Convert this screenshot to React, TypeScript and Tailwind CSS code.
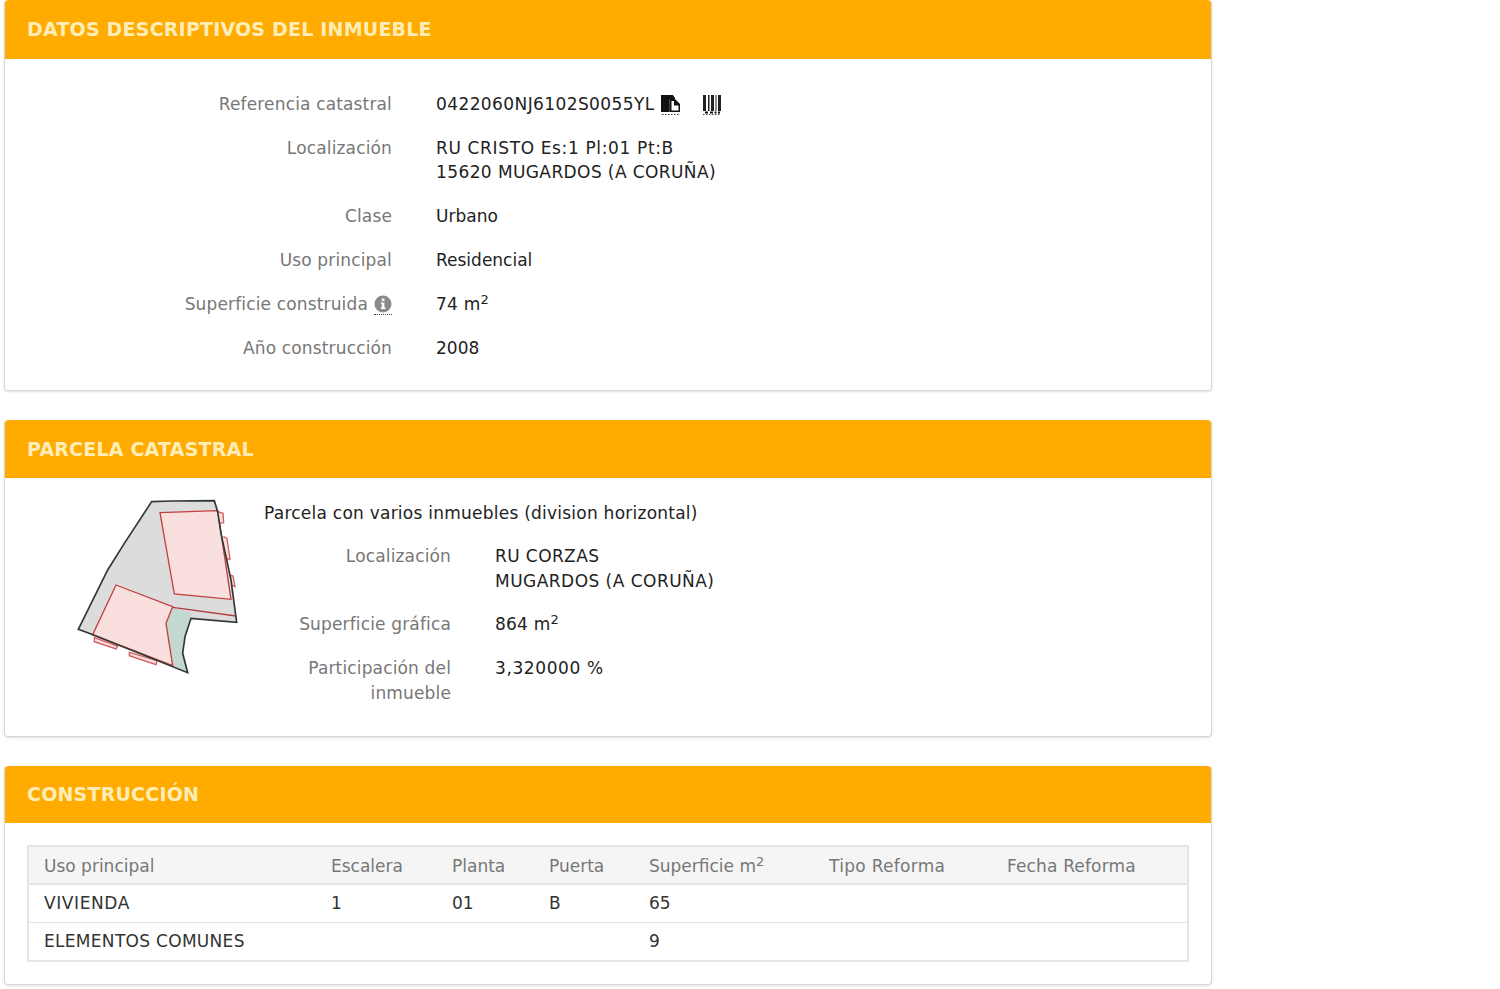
import React from 'react';

const font = "font-['DejaVu_Sans','Liberation_Sans',sans-serif]";

function PanelHeader({ title, height }: { title: string; height: string }) {
  return (
    <div className={`flex items-center rounded-t bg-[#ffab00] pl-[22px] text-[19px] font-bold tracking-[0.2px] text-[#ffedb8] ${height}`}>
      {title}
    </div>
  );
}

function Row({ label, width, gap, children }: { label: React.ReactNode; width: string; gap: string; children: React.ReactNode }) {
  return (
    <div className={`flex ${gap}`}>
      <div className={`text-right tracking-[0.15px] text-[#777] ${width}`}>{label}</div>
      <div className="text-[#222]">{children}</div>
    </div>
  );
}

function CopyIcon() {
  return (
    <svg width="19" height="20" viewBox="0 0 19 20" className="block">
      <path d="M0 0h12l2 3v1H8.500v13H0z" fill="#111" />
      <path d="M8.500 4H14l5 5v8H8.500z" fill="#111" />
      <path d="M10.500 6h2.500v4.500h4.500V15.500h-7z" fill="#fff" />
      <path d="M1 19.500h17" stroke="#333" strokeDasharray="1.500 1.500" fill="none" />
    </svg>
  );
}

function BarcodeIcon() {
  return (
    <svg width="18" height="20" viewBox="0 0 18 20" className="block">
      <path d="M0 0h3v16H0zM5 0h1.500v16H5zM8 0h3v16H8zM12.500 0h1v16h-1zM15 0h3v16h-3z" fill="#222" />
      <path d="M2 16.500h3v2H2zM7 16.500h3v2H7zM11.500 16.500h2v2h-2zM15 16.500h2v2h-2z" fill="#111" />
      <path d="M0 19.500h18" stroke="#444" strokeDasharray="1.500 1.500" fill="none" />
    </svg>
  );
}

function InfoIcon() {
  return (
    <span className="ml-[6px] block h-[20px] w-[18px] border-b border-dotted border-[#444]">
      <svg width="18" height="18" viewBox="0 0 18 18" className="block">
        <circle cx="9" cy="9" r="8.500" fill="#8a8a8a" />
        <rect x="7.800" y="3.500" width="2.600" height="2.600" fill="#fff" />
        <path d="M6.800 7.500h3.600v5h1.200v1.600H6.800v-1.600h1v-3.400h-1z" fill="#fff" />
      </svg>
    </span>
  );
}

function ParcelMap() {
  return (
    <svg width="190" height="195" viewBox="0 0 570 585" className="shrink-0">
      <path d="M272 35L460 32L470 65L480 130L495 200L510 270L527 397L390 385L372 440L365 490L380 548L90 432L52 418L140 240L190 160Z" fill="#dcdcdc" />
      <path d="M335 352L390 370L372 440L365 490L380 548L335 525L315 400Z" fill="#c3d8cf" />
      <path d="M297 68L470 62L510 328L340 312Z" fill="#f9dfdd" stroke="#c2403f" strokeWidth="4" />
      <path d="M165 285L335 350L315 400L335 527L95 434Z" fill="#f9dfdd" stroke="#c2403f" strokeWidth="4" />
      <path d="M335 352L525 378" fill="none" stroke="#b03f40" strokeWidth="4" />
      <path d="M470 65L486 70L488 98L476 100M487 140L498 145L507 208L496 205M505 255L516 258L522 290L510 285M100 443L170 468L165 477L100 455ZM205 487L288 512L285 524L205 497Z" fill="#f9dfdd" stroke="#d0605f" strokeWidth="4" />
      <path d="M272 35L332 33L460 32L470 65L480 130L495 200L510 270L527 397L390 385L372 440L365 490L380 548L90 432L52 418L140 240L190 160Z" fill="none" stroke="#2f3a36" strokeWidth="5" />
    </svg>
  );
}

const columns = ['w-[287px]', 'w-[121px]', 'w-[97px]', 'w-[100px]', 'w-[180px]', 'w-[178px]', 'flex-1'];

function TableRow({ cells, className }: { cells: React.ReactNode[]; className: string }) {
  return (
    <div className={`flex items-center ${className}`}>
      {cells.map((cell, i) => (
        <div key={i} className={`pl-[15px] ${columns[i]}`}>{cell}</div>
      ))}
    </div>
  );
}

export default function App() {
  const m2 = <>m<sup className="relative top-[1px] align-super text-[13px] leading-none">2</sup></>;

  return (
    <div className={`${font} h-[989px] w-[1500px] overflow-hidden bg-white text-[17px] leading-[24.500px]`}>
      <div className="ml-1 flex w-[1208px] flex-col gap-[29px]">
        <section className="h-[391px] rounded border border-t-0 border-[#d8d8d8] shadow-sm">
          <PanelHeader title="DATOS DESCRIPTIVOS DEL INMUEBLE" height="h-[59px]" />
          <div className="flex flex-col gap-5 pt-[33px] leading-6">
            <Row label="Referencia catastral" width="w-[387px]" gap="gap-[44px]">
              <div className="flex h-6 items-start">
                <span className="tracking-[0.4px]">0422060NJ6102S0055YL</span>
                <span className="ml-[6px] mt-[3px]"><CopyIcon /></span>
                <span className="ml-[23px] mt-[3px]"><BarcodeIcon /></span>
              </div>
            </Row>
            <Row label="Localización" width="w-[387px]" gap="gap-[44px]">
              <div className="tracking-[0.64px]">RU CRISTO Es:1 Pl:01 Pt:B</div>
              <div className="tracking-[0.4px]">15620 MUGARDOS (A CORUÑA)</div>
            </Row>
            <Row label="Clase" width="w-[387px]" gap="gap-[44px]">Urbano</Row>
            <Row label="Uso principal" width="w-[387px]" gap="gap-[44px]">Residencial</Row>
            <Row
              label={<div className="flex h-6 items-start justify-end"><span>Superficie construida</span><span className="mt-[3px]"><InfoIcon /></span></div>}
              width="w-[387px]"
              gap="gap-[44px]"
            >
              <span className="tracking-[0.2px]">74 {m2}</span>
            </Row>
            <Row label="Año construcción" width="w-[387px]" gap="gap-[44px]">2008</Row>
          </div>
        </section>

        <section className="h-[317px] rounded border border-t-0 border-[#d8d8d8] shadow-sm">
          <PanelHeader title="PARCELA CATASTRAL" height="h-[58px]" />
          <div className="flex pl-[56px] pt-[12px]">
            <ParcelMap />
            <div className="ml-[13px] pt-[11px] leading-[25px]">
              <div className="tracking-[0.24px] text-[#222]">Parcela con varios inmuebles (division horizontal)</div>
              <div className="mt-[18px] flex flex-col gap-[18px]">
                <Row label="Localización" width="w-[187px]" gap="gap-[44px]">
                  <div className="tracking-[0.4px]">RU CORZAS</div>
                  <div className="tracking-[0.47px]">MUGARDOS (A CORUÑA)</div>
                </Row>
                <Row label="Superficie gráfica" width="w-[187px]" gap="gap-[44px]">
                  <span className="tracking-[0.2px]">864 {m2}</span>
                </Row>
                <div className="pt-[1px]">
                  <Row label={<>Participación del<br />inmueble</>} width="w-[187px]" gap="gap-[44px]">
                    <span className="tracking-[0.6px]">3,320000 %</span>
                  </Row>
                </div>
              </div>
            </div>
          </div>
        </section>

        <section className="h-[219px] rounded border border-t-0 border-[#d8d8d8] shadow-sm">
          <PanelHeader title="CONSTRUCCIÓN" height="h-[57px]" />
          <div className="mx-[22px] mt-[22px] border-2 border-[#e4e4e4] text-[#333]">
            <TableRow
              className="h-[38px] border-b-2 border-[#e4e4e4] bg-[#f5f5f5] pt-[2px] text-[#777]"
              cells={[
                'Uso principal',
                'Escalera',
                'Planta',
                'Puerta',
                <>Superficie {m2}</>,
                <span className="tracking-[0.3px]">Tipo Reforma</span>,
                <span className="tracking-[0.15px]">Fecha Reforma</span>,
              ]}
            />
            <TableRow
              className="h-[38px] border-b border-[#e4e4e4]"
              cells={[<span className="tracking-[0.6px]">VIVIENDA</span>, '1', '01', 'B', '65', '', '']}
            />
            <TableRow
              className="h-[37px]"
              cells={[<span className="tracking-[0.3px]">ELEMENTOS COMUNES</span>, '', '', '', '9', '', '']}
            />
          </div>
        </section>
      </div>
    </div>
  );
}
